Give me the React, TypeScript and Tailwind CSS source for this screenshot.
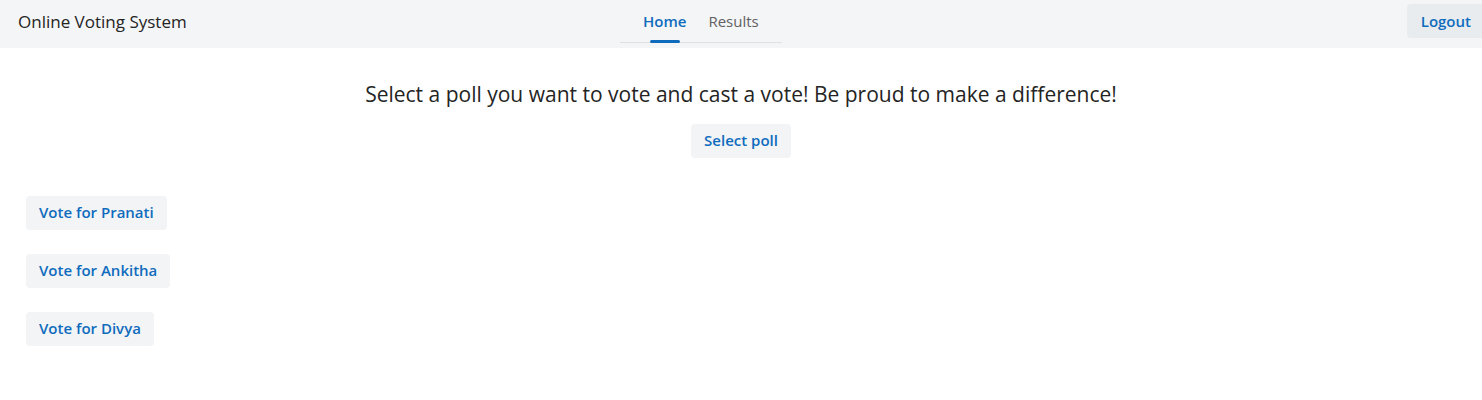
import { useState } from 'react'

const candidates = ['Pranati', 'Ankitha', 'Divya']

export default function App() {
  const [tab, setTab] = useState('home')

  return (
    <div className="min-h-[400px] bg-white font-['Open_Sans',sans-serif] text-[#242424]">
      <header className="flex h-12 items-start bg-[#f4f5f7]">
        <div className="flex h-11 w-[620px] items-center pl-[18px] text-[17px] text-[#242424]">
          Online Voting System
        </div>

        <nav className="flex h-[43px] items-stretch border-b border-[#e0e0e0] px-[12px]">
          {[
            ['home', 'Home'],
            ['results', 'Results'],
          ].map(([key, label]) => (
            <button
              key={key}
              onClick={() => setTab(key)}
              className={`relative flex items-start px-[11px] pt-[10px] text-[15px] ${
                tab === key ? 'font-semibold text-[#0f6cbd]' : 'text-[#616161]'
              }`}
            >
              {label}
              {tab === key && (
                <span className="absolute bottom-[-1px] left-1/2 h-[3px] w-[30px] -translate-x-1/2 rounded-full bg-[#0f6cbd]" />
              )}
            </button>
          ))}
        </nav>

        <div className="flex flex-1 justify-end pt-1">
          <button className="h-[34px] rounded-l-[4px] bg-[#e9ecef] pl-[14px] pr-[11px] text-[15px] font-semibold text-[#0f6cbd]">
            Logout
          </button>
        </div>
      </header>

      <main className="flex flex-col items-center pt-[31px]">
        <h1 className="text-[21px] text-[#242424]">
          Select a poll you want to vote and cast a vote! Be proud to make a difference!
        </h1>
        <button className="mt-[13px] h-[34px] rounded-[4px] bg-[#f3f4f6] px-[13px] text-[15px] font-semibold text-[#0f6cbd]">
          Select poll
        </button>
      </main>

      <section className="flex flex-col items-start gap-6 pl-[26px] pt-[38px]">
        {candidates.map((name) => (
          <button
            key={name}
            className="h-[34px] rounded-[4px] bg-[#f3f4f6] px-[13px] text-[15px] font-semibold text-[#0f6cbd]"
          >
            Vote for {name}
          </button>
        ))}
      </section>
    </div>
  )
}
